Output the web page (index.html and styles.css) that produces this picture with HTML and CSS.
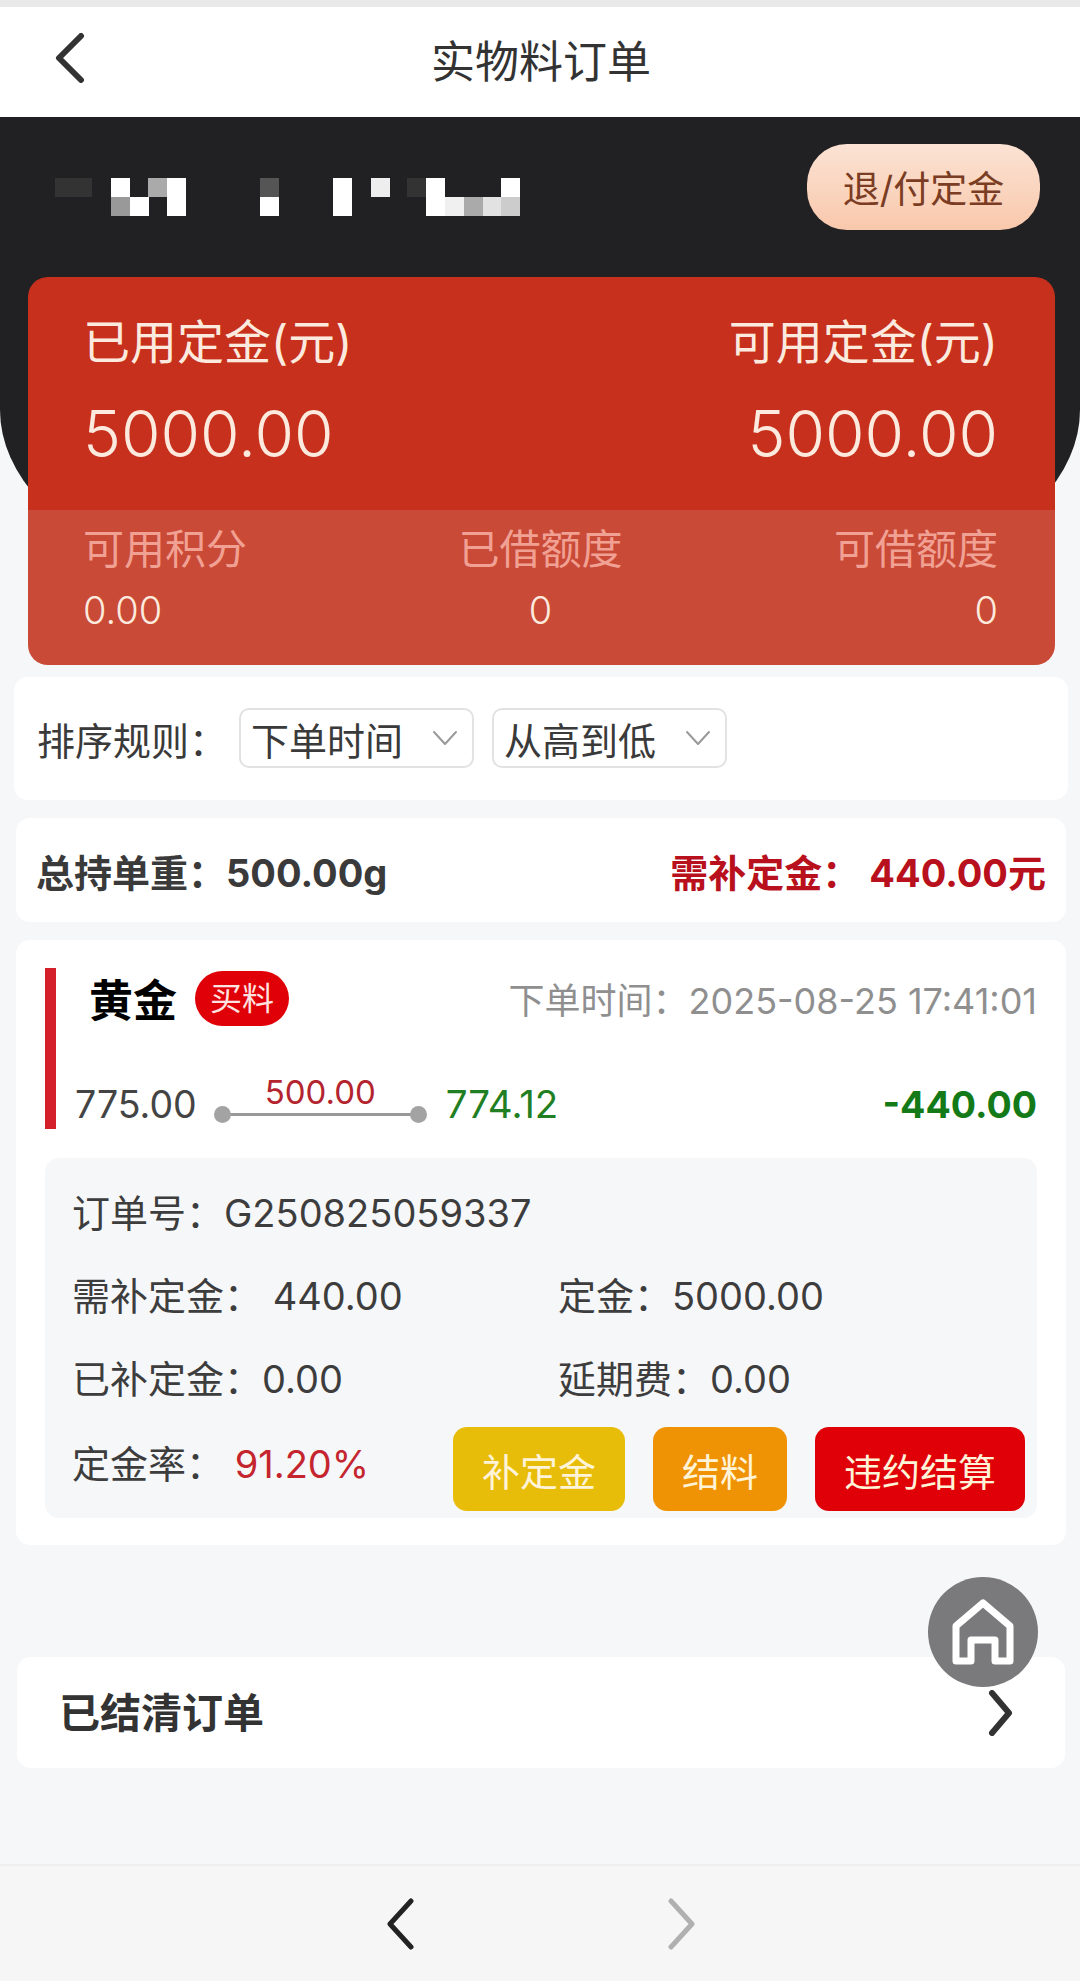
FILE: index.html
```html
<!DOCTYPE html>
<html lang="zh-CN">
<head>
    <meta charset="UTF-8">
    <meta name="viewport" content="width=device-width, initial-scale=1.0">
    <title>实物料订单</title>
    <link rel="stylesheet" href="styles.css">
</head>
<body>
    <div class="page">
        <header class="topbar">
            <svg class="topbar-back" width="30" height="50" viewBox="0 0 30 50"><path d="M26 3 L4 25 L26 47"/></svg>
            <h1>实物料订单</h1>
        </header>

        <section class="hero">
            <div class="account">
                <!-- masked account name -->
                <svg class="account-name" width="470" height="38" viewBox="0 0 470 38">
                    <rect x="0" y="0" width="37" height="19" fill="#333"/>
                    <rect x="56" y="0" width="19" height="19" fill="#fff"/>
                    <rect x="93" y="0" width="19" height="19" fill="#aaa"/>
                    <rect x="112" y="0" width="19" height="19" fill="#fff"/>
                    <rect x="205" y="0" width="19" height="19" fill="#555"/>
                    <rect x="278" y="0" width="19" height="19" fill="#fff"/>
                    <rect x="316" y="0" width="19" height="19" fill="#eee"/>
                    <rect x="352" y="0" width="19" height="19" fill="#333"/>
                    <rect x="371" y="0" width="19" height="19" fill="#fff"/>
                    <rect x="446" y="0" width="19" height="19" fill="#fff"/>
                    <rect x="56" y="19" width="19" height="19" fill="#999"/>
                    <rect x="75" y="19" width="19" height="19" fill="#fff"/>
                    <rect x="112" y="19" width="19" height="19" fill="#fff"/>
                    <rect x="205" y="19" width="19" height="19" fill="#fff"/>
                    <rect x="278" y="19" width="19" height="19" fill="#fff"/>
                    <rect x="371" y="19" width="19" height="19" fill="#fff"/>
                    <rect x="390" y="19" width="19" height="19" fill="#f0f0f0"/>
                    <rect x="409" y="19" width="19" height="19" fill="#aaa"/>
                    <rect x="428" y="19" width="19" height="19" fill="#e2e2e2"/>
                    <rect x="446" y="19" width="19" height="19" fill="#ccc"/>
                </svg>
                <a class="deposit-btn">退/付定金</a>
            </div>

            <div class="funds">
                <div class="funds-main">
                    <div>
                        <div class="funds-label">已用定金(元)</div>
                        <div class="funds-value">5000.00</div>
                    </div>
                    <div class="align-right">
                        <div class="funds-label">可用定金(元)</div>
                        <div class="funds-value">5000.00</div>
                    </div>
                </div>
                <div class="funds-sub">
                    <div>
                        <div class="sub-label">可用积分</div>
                        <div class="sub-value">0.00</div>
                    </div>
                    <div class="align-center">
                        <div class="sub-label">已借额度</div>
                        <div class="sub-value">0</div>
                    </div>
                    <div class="align-right">
                        <div class="sub-label">可借额度</div>
                        <div class="sub-value">0</div>
                    </div>
                </div>
            </div>
        </section>

        <section class="card sort-card">
            <span class="sort-title">排序规则：</span>
            <div class="select">下单时间
                <svg width="26" height="16" viewBox="0 0 26 16"><path d="M2 2 L13 14 L24 2"/></svg>
            </div>
            <div class="select">从高到低
                <svg width="26" height="16" viewBox="0 0 26 16"><path d="M2 2 L13 14 L24 2"/></svg>
            </div>
        </section>

        <section class="card summary-card">
            <span>总持单重：500.00g</span>
            <span class="summary-due">需补定金：&nbsp;440.00元</span>
        </section>

        <section class="card order-card">
            <div class="order-head">
                <div class="order-title">
                    <strong>黄金</strong>
                    <span class="badge">买料</span>
                    <span class="order-time">下单时间：2025-08-25 17:41:01</span>
                </div>
                <div class="order-price">
                    <span>775.00</span>
                    <div class="weight-line">
                        <span class="weight-num">500.00</span>
                    </div>
                    <span class="price-green">774.12</span>
                    <strong class="profit">-440.00</strong>
                </div>
            </div>

            <div class="order-detail">
                <div class="detail-row">订单号：G250825059337</div>
                <div class="detail-row detail-cols">
                    <span>需补定金：&nbsp;440.00</span>
                    <span>定金：5000.00</span>
                </div>
                <div class="detail-row detail-cols">
                    <span>已补定金：0.00</span>
                    <span>延期费：0.00</span>
                </div>
                <div class="detail-actions">
                    <span class="rate-text">定金率：&nbsp;<em class="rate">91.20%</em></span>
                    <div class="actions">
                        <a class="btn btn-yellow">补定金</a>
                        <a class="btn btn-orange">结料</a>
                        <a class="btn btn-red">违约结算</a>
                    </div>
                </div>
            </div>
        </section>

        <section class="card closed-card">
            <span>已结清订单</span>
            <svg width="26" height="46" viewBox="0 0 26 46"><path d="M4 3 L21 23 L4 43"/></svg>
        </section>

        <a class="home-btn">
            <svg width="64" height="66" viewBox="0 0 64 66">
                <path d="M5 62 V27 L32 4 L59 27 V62 H44 V41 H20 V62 Z"/>
            </svg>
        </a>

        <footer class="bottom-nav">
            <svg class="nav-prev" width="30" height="52" viewBox="0 0 30 52"><path d="M26 3 L5 26 L26 49"/></svg>
            <svg class="nav-next" width="30" height="52" viewBox="0 0 30 52"><path d="M4 3 L25 26 L4 49"/></svg>
        </footer>
    </div>
</body>
</html>
```

FILE: styles.css
```css
* {
    box-sizing: border-box;
}
body {
    margin: 0;
    background-color: #f6f7f9;
    color: #333;
    font-family: Inter, "Noto Sans CJK SC", sans-serif;
}
svg path {
    fill: none;
    stroke-linecap: round;
    stroke-linejoin: round;
}

.page {
    position: relative;
    width: 1080px;
    height: 1981px;
    overflow: hidden;
    display: flex;
    flex-direction: column;
    border-top: 7px solid #e9e9e9;
}

.topbar {
    position: relative;
    height: 110px;
    background: #fff;
    display: flex;
    align-items: center;
    justify-content: center;
    padding: 0 0 6px 2px;
}
.topbar h1 {
    margin: 0;
    font-size: 44px;
    font-weight: 400;
    color: #333;
}
.topbar-back {
    position: absolute;
    left: 55px;
    top: 26px;
}
.topbar-back path {
    stroke: #333;
    stroke-width: 6;
}

/* dark panel with the rounded bottom sits behind the funds card */
.hero {
    position: relative;
    height: 548px;
    padding: 27px 25px 0 28px;
}
.hero::before {
    content: "";
    position: absolute;
    top: 0;
    left: 0;
    right: 0;
    height: 535px;
    background: #212123;
    border-radius: 0 0 540px 540px / 0 0 242px 242px;
}
.account {
    position: relative;
    height: 86px;
    display: flex;
    align-items: center;
    justify-content: space-between;
    padding: 0 15px 0 27px;
}
.account-name {
    margin-top: 20px;
}
.deposit-btn {
    width: 233px;
    height: 86px;
    border-radius: 40px;
    display: flex;
    align-items: center;
    justify-content: center;
    font-size: 37px;
    color: #7a3c22;
    background: linear-gradient(#fbe3d4, #f9c8ac);
}

.funds {
    position: relative;
    margin-top: 47px;
    border-radius: 20px;
    overflow: hidden;
    color: #fdeade;
}
.funds-main {
    height: 233px;
    padding: 35px 57px 0 55px;
    display: flex;
    justify-content: space-between;
    background: #c6301c;
}
.funds-label {
    font-size: 47px;
    line-height: 60px;
}
.funds-value {
    margin-top: 27px;
    font-size: 64px;
    line-height: 70px;
    font-weight: 300;
}
.funds-sub {
    height: 155px;
    padding: 13px 57px 0 55px;
    display: flex;
    justify-content: space-between;
    background: #c94a37;
}
.sub-label {
    font-size: 41px;
    line-height: 52px;
    color: #f1a193;
}
.sub-value {
    margin-top: 11px;
    font-size: 38px;
    line-height: 48px;
    font-weight: 300;
}
.align-right {
    text-align: right;
}
.align-center {
    text-align: center;
}

.card {
    background: #fff;
    border-radius: 14px;
    margin-left: 16px;
    margin-right: 14px;
}

.sort-card {
    margin: 12px 12px 0 14px;
    height: 123px;
    padding-left: 23px;
    padding-bottom: 1px;
    display: flex;
    align-items: center;
    font-size: 38px;
    color: #3a3a3a;
}
.sort-title {
    width: 202px;
}
.select {
    width: 235px;
    height: 60px;
    margin-right: 18px;
    padding: 0 14px 0 10px;
    display: flex;
    align-items: center;
    justify-content: space-between;
    border: 2px solid #e2e2e2;
    border-radius: 10px;
    background: #fff;
}
.select path {
    stroke: #999;
    stroke-width: 2;
}

.summary-card {
    margin-top: 18px;
    height: 104px;
    padding: 0 20px 0 20px;
    display: flex;
    align-items: center;
    justify-content: space-between;
    font-size: 38px;
    font-weight: 700;
    color: #3a3a3a;
}
.summary-due {
    color: #b8101c;
}

.order-card {
    margin-top: 18px;
    height: 605px;
    padding: 28px 29px 0;
}
.order-head {
    height: 161px;
    border-left: 11px solid #d3202a;
}
.order-title {
    display: flex;
    align-items: center;
    height: 60px;
    padding-left: 33px;
}
.order-title strong {
    font-size: 44px;
    color: #000;
}
.badge {
    margin-left: 18px;
    width: 94px;
    height: 55px;
    border-radius: 28px;
    background: #e00008;
    color: #ffe3e0;
    font-size: 32px;
    text-align: center;
    line-height: 55px;
}
.order-time {
    margin-left: auto;
    font-size: 36px;
    color: #8f8f8f;
}
.order-price {
    display: flex;
    align-items: center;
    margin-top: 53px;
    padding-left: 19px;
    font-size: 37.5px;
    color: #444;
}
.weight-line {
    position: relative;
    width: 197px;
    height: 3px;
    margin: 20px 27px 0 25px;
    background: #999;
}
/* end dots of the weight line */
.weight-line::before,
.weight-line::after {
    content: "";
    position: absolute;
    top: -7px;
    width: 17px;
    height: 17px;
    border-radius: 50%;
    background: #a3a3a3;
}
.weight-line::before {
    left: -8px;
}
.weight-line::after {
    right: -8px;
}
.weight-num {
    position: absolute;
    left: 0;
    right: 0;
    bottom: 3px;
    text-align: center;
    font-size: 33px;
    line-height: 42px;
    color: #b3242e;
}
.price-green {
    color: #1f7f22;
    font-size: 38.5px;
}
.profit {
    margin-left: auto;
    color: #137a17;
}

.order-detail {
    margin-top: 29px;
    height: 360px;
    padding: 11px 12px 8px 27px;
    background: #f6f7f9;
    border-radius: 14px;
    font-size: 38px;
    color: #3d3d3d;
}
.detail-row {
    height: 83px;
    display: flex;
    align-items: center;
}
.detail-cols span:first-child {
    width: 486px;
}
.detail-actions {
    display: flex;
    align-items: center;
    justify-content: space-between;
    height: 84px;
    margin-top: 9px;
}
.rate-text {
    margin-bottom: 15px;
}
.rate {
    font-style: normal;
    color: #c4252e;
}
.actions {
    display: flex;
    gap: 28px;
}
.btn {
    height: 84px;
    padding: 0 29px;
    border-radius: 14px;
    display: flex;
    align-items: center;
    color: #fff3d8;
}
.btn-yellow {
    background: #e8bd0a;
}
.btn-orange {
    background: #ef9304;
}
.btn-red {
    background: #e00008;
}

.closed-card {
    margin: 112px 15px 0 17px;
    height: 111px;
    padding: 0 51px 6px 42px;
    display: flex;
    align-items: center;
    justify-content: space-between;
    font-size: 41px;
    font-weight: 700;
    color: #333;
}
.closed-card svg {
    margin-top: 6px;
}
.closed-card path {
    stroke: #333;
    stroke-width: 6;
}

.home-btn {
    position: absolute;
    left: 928px;
    top: 1570px;
    width: 110px;
    height: 110px;
    border-radius: 50%;
    background: #7a7a7c;
    display: flex;
    align-items: center;
    justify-content: center;
}
.home-btn path {
    stroke: #fff;
    stroke-width: 7;
}

.bottom-nav {
    margin-top: auto;
    height: 117px;
    border-top: 2px solid #efefef;
    background: #f6f6f6;
    display: flex;
    align-items: center;
    justify-content: center;
    gap: 252px;
    padding-left: 2px;
}
.nav-prev path {
    stroke: #222;
    stroke-width: 5;
}
.nav-next path {
    stroke: #b0b0b0;
    stroke-width: 5;
}
```
